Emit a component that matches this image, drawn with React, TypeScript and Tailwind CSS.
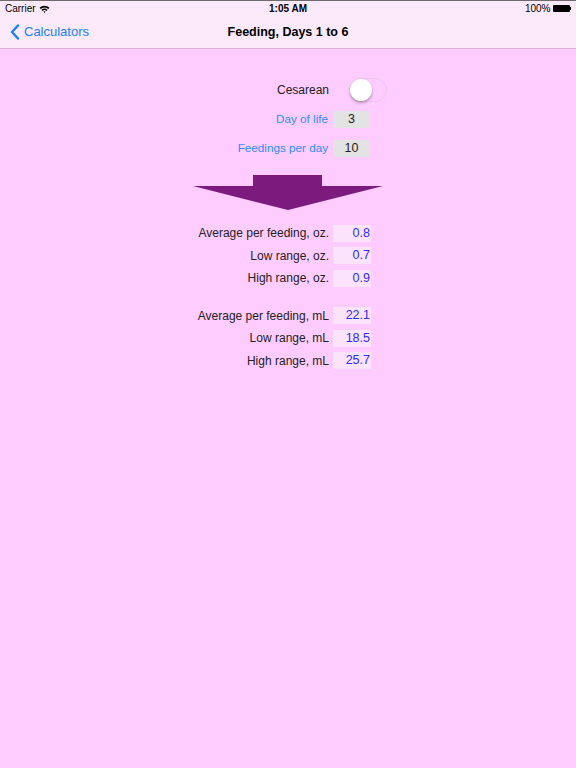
import React from 'react';

const font = { fontFamily: '"Liberation Sans", Arial, sans-serif' };

const Row = ({ label, value }: { label: string; value: string }) => (
  <div className="flex items-center h-[22.5px]">
    <div className="w-[329px] text-right text-[12px] text-[#222]">{label}</div>
    <div className="ml-[4px] w-[38px] h-[17px] bg-[#fbe3fb] text-right pr-[1px] text-[12.5px] leading-[17px] text-[#2d2dff]">
      {value}
    </div>
  </div>
);

const App: React.FC = () => {
  return (
    <div className="w-[576px] h-[768px] bg-[#ffccff] overflow-hidden" style={font}>
      {/* Status + nav bar */}
      <div className="bg-[#f9e9f9] border-t border-t-[#6e6a6e] border-b border-b-[#d9b3d9]">
        <div className="h-[15px] flex items-center justify-between px-[5px] text-[10px] text-black relative">
          <div className="flex items-center gap-[3px]">
            <span>Carrier</span>
            <svg width="11" height="8" viewBox="0 0 11 8">
              <path d="M0.5 2.8 A7 7 0 0 1 10.5 2.8 L9.3 4 A5.3 5.3 0 0 0 1.7 4 Z" fill="#000" />
              <path d="M2.5 4.8 A4.2 4.2 0 0 1 8.5 4.8 L7.3 6 A2.5 2.5 0 0 0 3.7 6 Z" fill="#000" />
              <path d="M4.5 6.8 L5.5 7.9 L6.5 6.8 A1.4 1.4 0 0 0 4.5 6.8 Z" fill="#000" />
            </svg>
          </div>
          <span className="absolute left-1/2 -translate-x-1/2 font-semibold">1:05 AM</span>
          <div className="flex items-center gap-[2px]">
            <span>100%</span>
            <div className="flex items-center">
              <div className="w-[17px] h-[7px] bg-black rounded-[1px]" />
              <div className="w-[1.5px] h-[3px] bg-black" />
            </div>
          </div>
        </div>
        <div className="h-[32px] flex items-center relative">
          <div className="flex items-center pl-[10px] text-[#1a7ffb] text-[13px]">
            <svg width="10" height="16" viewBox="0 0 10 16" className="mr-[4px]">
              <path d="M8 1.5 L2 8 L8 14.5" stroke="#1a7ffb" strokeWidth="2.4" fill="none" strokeLinecap="round" strokeLinejoin="round" />
            </svg>
            <span>Calculators</span>
          </div>
          <span className="absolute left-1/2 -translate-x-1/2 text-[12.5px] font-semibold text-black">Feeding, Days 1 to 6</span>
        </div>
      </div>

      {/* Inputs */}
      <div className="pt-[27px]">
        <div className="flex items-center h-[28px]">
          <div className="w-[329px] text-right text-[12px] text-[#222]">Cesarean</div>
          <div className="ml-[20px] w-[38px] h-[24px] rounded-full border border-[#ecc6ec] relative">
            <div className="absolute left-0 top-0 w-[22px] h-[22px] rounded-full bg-white shadow-[0_2px_3px_rgba(0,0,0,0.3)]" />
          </div>
        </div>
        <div className="flex items-center h-[18px] mt-[6px]">
          <div className="w-[328px] text-right text-[11.7px] text-[#2f8cff]">Day of life</div>
          <div className="ml-[5px] w-[37px] h-[17px] bg-[#e3e3e3] text-center text-[12.5px] leading-[17px] text-[#222]">3</div>
        </div>
        <div className="flex items-center h-[18px] mt-[11px]">
          <div className="w-[328px] text-right text-[11.7px] text-[#2f8cff]">Feedings per day</div>
          <div className="ml-[5px] w-[37px] h-[17px] bg-[#e3e3e3] text-center text-[12.5px] leading-[17px] text-[#222]">10</div>
        </div>
      </div>

      {/* Arrow */}
      <div className="mt-[18px] pl-[193px]">
        <svg width="191" height="36" viewBox="0 0 191 36" className="block">
          <path d="M60 0 H129 V11 H190 L95 35 L0 11 H60 Z" fill="#7d1a7d" />
        </svg>
      </div>

      {/* Results */}
      <div className="mt-[11px]">
        <Row label="Average per feeding, oz." value="0.8" />
        <Row label="Low range, oz." value="0.7" />
        <Row label="High range, oz." value="0.9" />
        <div className="h-[15px]" />
        <Row label="Average per feeding, mL" value="22.1" />
        <Row label="Low range, mL" value="18.5" />
        <Row label="High range, mL" value="25.7" />
      </div>
    </div>
  );
};

export default App;
